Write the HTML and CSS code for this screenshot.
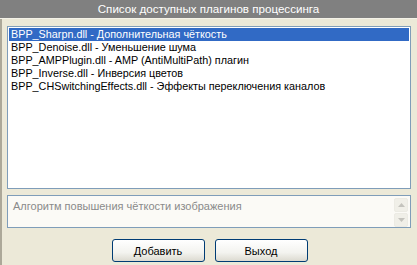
FILE: index.html
```html
<!DOCTYPE html>
<html lang="ru">
<head>
<meta charset="utf-8">
<link rel="stylesheet" href="styles.css">
</head>
<body>
<div class="window">
  <div class="title">Список доступных плагинов процессинга</div>
  <div class="content">
    <ul class="list">
      <li class="item selected">BPP_Sharpn.dll - Дополнительная чёткость</li>
      <li class="item">BPP_Denoise.dll - Уменьшение шума</li>
      <li class="item">BPP_AMPPlugin.dll - AMP (AntiMultiPath) плагин</li>
      <li class="item">BPP_Inverse.dll - Инверсия цветов</li>
      <li class="item">BPP_CHSwitchingEffects.dll - Эффекты переключения каналов</li>
    </ul>
    <div class="desc">
      <div class="desc-text">Алгоритм повышения чёткости изображения</div>
      <div class="scroll">
        <div class="sbtn"><svg width="7" height="4" viewBox="0 0 7 4"><path d="M0 4 L3.5 0 L7 4 Z" fill="#c4c3bd"/></svg></div>
        <div class="sbtn"><svg width="7" height="4" viewBox="0 0 7 4"><path d="M0 0 L3.5 4 L7 0 Z" fill="#c4c3bd"/></svg></div>
      </div>
    </div>
    <div class="buttons">
      <button class="btn">Добавить</button>
      <button class="btn">Выход</button>
    </div>
  </div>
</div>
</body>
</html>
```
FILE: styles.css
```css
html, body {
  margin: 0;
  padding: 0;
}
body {
  background: #ECE9D8;
  font-family: "Liberation Sans", "DejaVu Sans", sans-serif;
  font-size: 11px;
  color: #000;
  width: 417px;
  height: 265px;
  overflow: hidden;
}
.window {
  height: 265px;
  border-left: 2px solid #ACA899;
  box-sizing: border-box;
  position: relative;
}
.title {
  height: 18px;
  margin-left: -2px;
  background: #808080;
  color: #fff;
  font-size: 11.6px;
  line-height: 18px;
  text-align: center;
  border-bottom: 1px solid #f4f2e8;
}
.content {
  padding: 7px 6px 0 5px;
}
.list {
  list-style: none;
  margin: 0;
  padding: 1px;
  height: 159px;
  border: 1px solid #7F9DB9;
  background: #fff;
}
.item {
  height: 13px;
  line-height: 13px;
  padding-left: 2px;
  white-space: nowrap;
  font-size: 10.8px;
}
.selected {
  background: #316AC5;
  color: #fff;
}
.desc {
  margin-top: 6px;
  height: 31px;
  border: 1px solid #7F9DB9;
  background: #FBFAF6;
  display: flex;
  justify-content: space-between;
}
.desc-text {
  color: #8a8a8a;
  padding: 4px 0 0 5px;
  line-height: 13px;
}
.scroll {
  display: flex;
  flex-direction: column;
  gap: 1px;
  padding: 2px 2px 0 0;
}
.sbtn {
  width: 14px;
  height: 14px;
  box-sizing: border-box;
  border: 1px solid #ecebe4;
  border-radius: 2px;
  background: #f0efe8;
  display: flex;
  align-items: center;
  justify-content: center;
}
.buttons {
  margin-top: 11px;
  display: flex;
  justify-content: center;
  gap: 10px;
  padding-left: 1px;
}
.btn {
  width: 93px;
  height: 23px;
  border: 1px solid #003C74;
  border-radius: 3px;
  background: linear-gradient(#ffffff, #f3f3ef 60%, #dcdad0);
  font-family: inherit;
  font-size: 11px;
  color: #000;
  padding: 0;
}
```
